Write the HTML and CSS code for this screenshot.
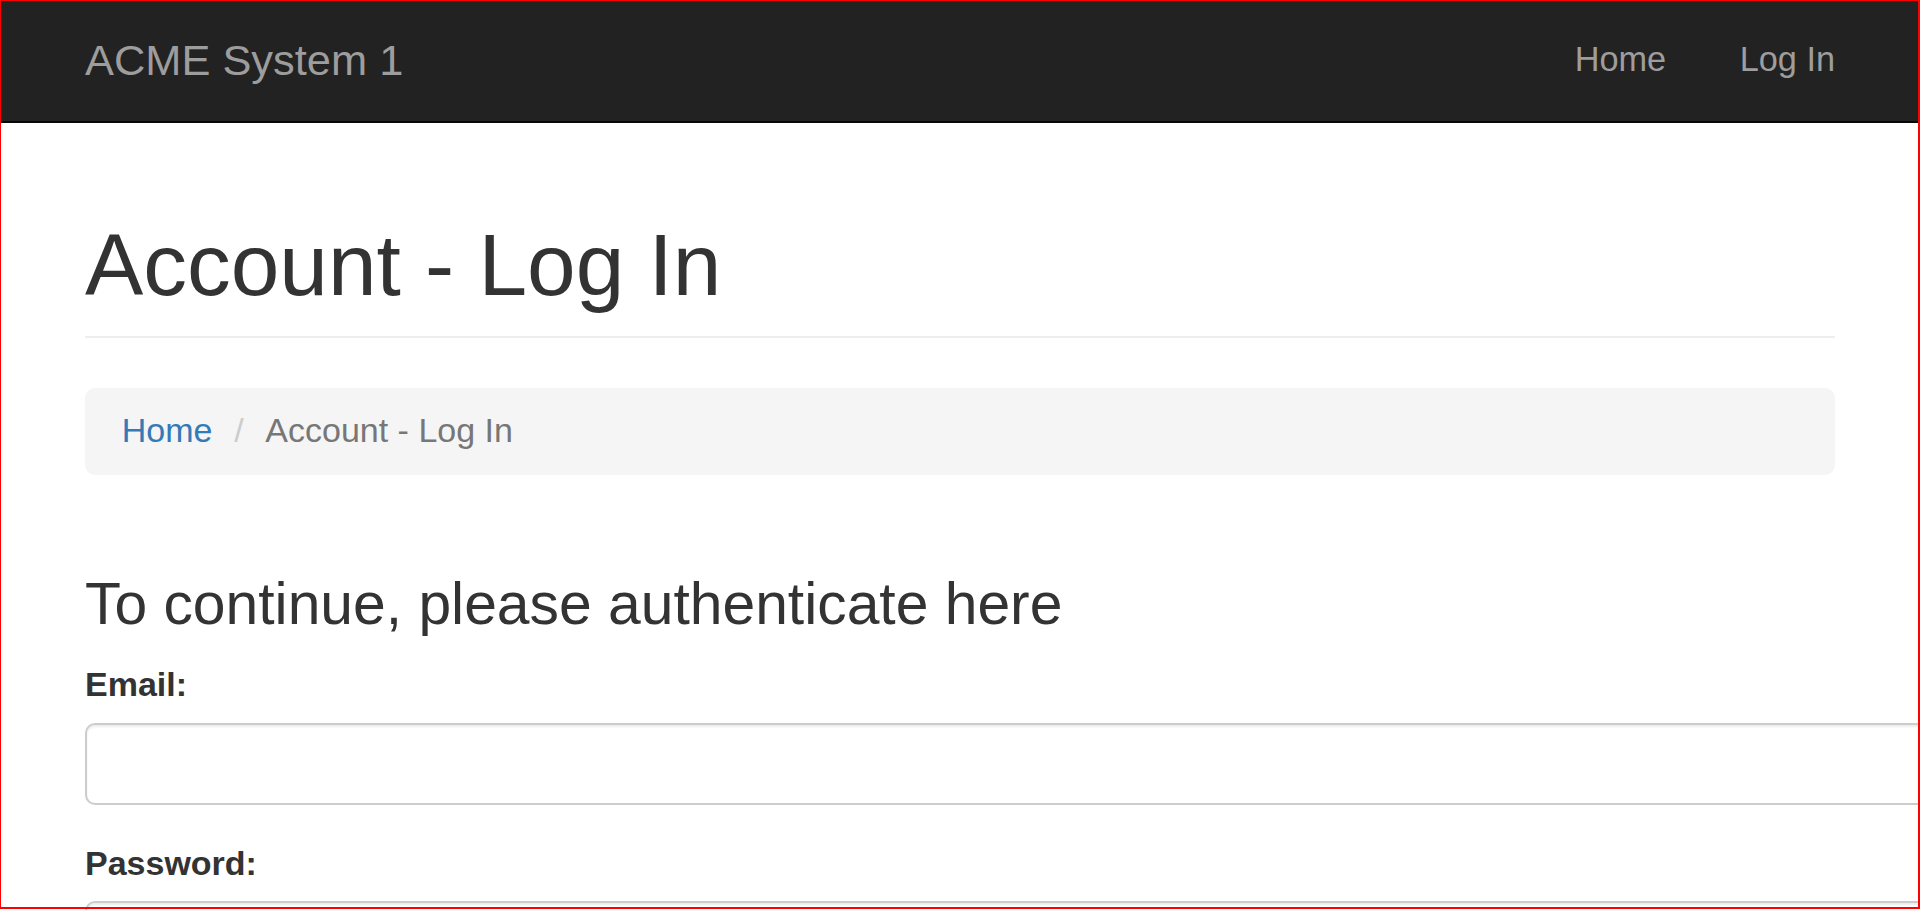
FILE: index.html
```html
<!DOCTYPE html>
<html lang="en">
<head>
<meta charset="utf-8">
<title>Account - Log In</title>
<link rel="stylesheet" href="styles.css">
</head>
<body>
<nav class="navbar">
  <div class="navbar-inner">
    <a class="brand" href="#">ACME System 1</a>
    <ul class="nav">
      <li><a href="#">Home</a></li>
      <li><a href="#">Log In</a></li>
    </ul>
  </div>
</nav>
<main class="container">
  <div class="page-header">
    <h1>Account - Log In</h1>
  </div>
  <ol class="breadcrumb">
    <li><a href="#">Home</a></li>
    <li class="active">Account - Log In</li>
  </ol>
  <section class="login">
    <h3>To continue, please authenticate here</h3>
    <form>
      <div class="form-group">
        <label for="email">Email:</label>
        <input id="email" type="email" class="form-control">
      </div>
      <div class="form-group">
        <label for="password">Password:</label>
        <input id="password" type="password" class="form-control">
      </div>
    </form>
  </section>
</main>
<div class="frame"></div>
</body>
</html>
```

FILE: styles.css
```css
html {
  overflow: hidden;
}
body {
  margin: 0;
  font-family: "Liberation Sans", Arial, Helvetica, sans-serif;
  font-size: 34px;
  line-height: 49px;
  color: #333;
  background: #fff;
}
a {
  text-decoration: none;
}

/* navbar */
.navbar {
  background: #222;
  border-bottom: 2px solid #080808;
  height: 121px;
}
.navbar-inner {
  display: flex;
  justify-content: space-between;
  align-items: flex-start;
  padding: 0 85px;
  height: 121px;
}
.brand {
  font-size: 43.4px;
  line-height: 49px;
  padding-top: 35.8px;
  color: #9d9d9d;
}
.nav {
  display: flex;
  list-style: none;
  margin: 0 -36.75px 0 0;
  padding: 0;
}
.nav a {
  display: block;
  padding: 35.3px 36.75px 0;
  line-height: 49px;
  font-size: 34.3px;
  color: #9d9d9d;
}

/* content */
.container {
  padding: 0 85px;
}
.page-header {
  margin-top: 94px;
  padding-bottom: 22px;
  border-bottom: 2px solid #eee;
}
.page-header h1 {
  margin: 0;
  font-size: 87.4px;
  line-height: 97px;
  font-weight: 500;
}
.breadcrumb {
  margin: 50px 0 0;
  padding: 18px 36.75px 20px;
  list-style: none;
  background: #f5f5f5;
  border-radius: 10px;
  line-height: 49px;
}
.breadcrumb li {
  display: inline-block;
}
.breadcrumb li + li::before {
  content: "/\00a0";
  padding: 0 12.25px;
  color: #ccc;
}
.breadcrumb a {
  color: #337ab7;
}
.breadcrumb .active {
  color: #777;
}
.login h3 {
  margin: 97.3px 0 23.3px;
  font-size: 58.8px;
  line-height: 64.7px;
  font-weight: 500;
}
.form-group {
  margin-bottom: 34.3px;
}
.form-group label {
  display: block;
  font-weight: 700;
  line-height: 49px;
  margin-bottom: 13.4px;
}
.form-control {
  display: block;
  box-sizing: border-box;
  width: 1900px;
  height: 82px;
  margin: 0;
  padding: 0 30px;
  font: inherit;
  color: #555;
  background: #fff;
  border: 2px solid #ccc;
  border-radius: 10px;
  box-shadow: inset 0 2px 2px rgba(0, 0, 0, 0.075);
}

/* red outline around the viewport */
.frame {
  position: fixed;
  top: 0;
  left: 0;
  width: 1920px;
  height: 909px;
  box-sizing: border-box;
  border-style: solid;
  border-color: #f00;
  border-width: 1px 2px 2px 1px;
  pointer-events: none;
}
```
